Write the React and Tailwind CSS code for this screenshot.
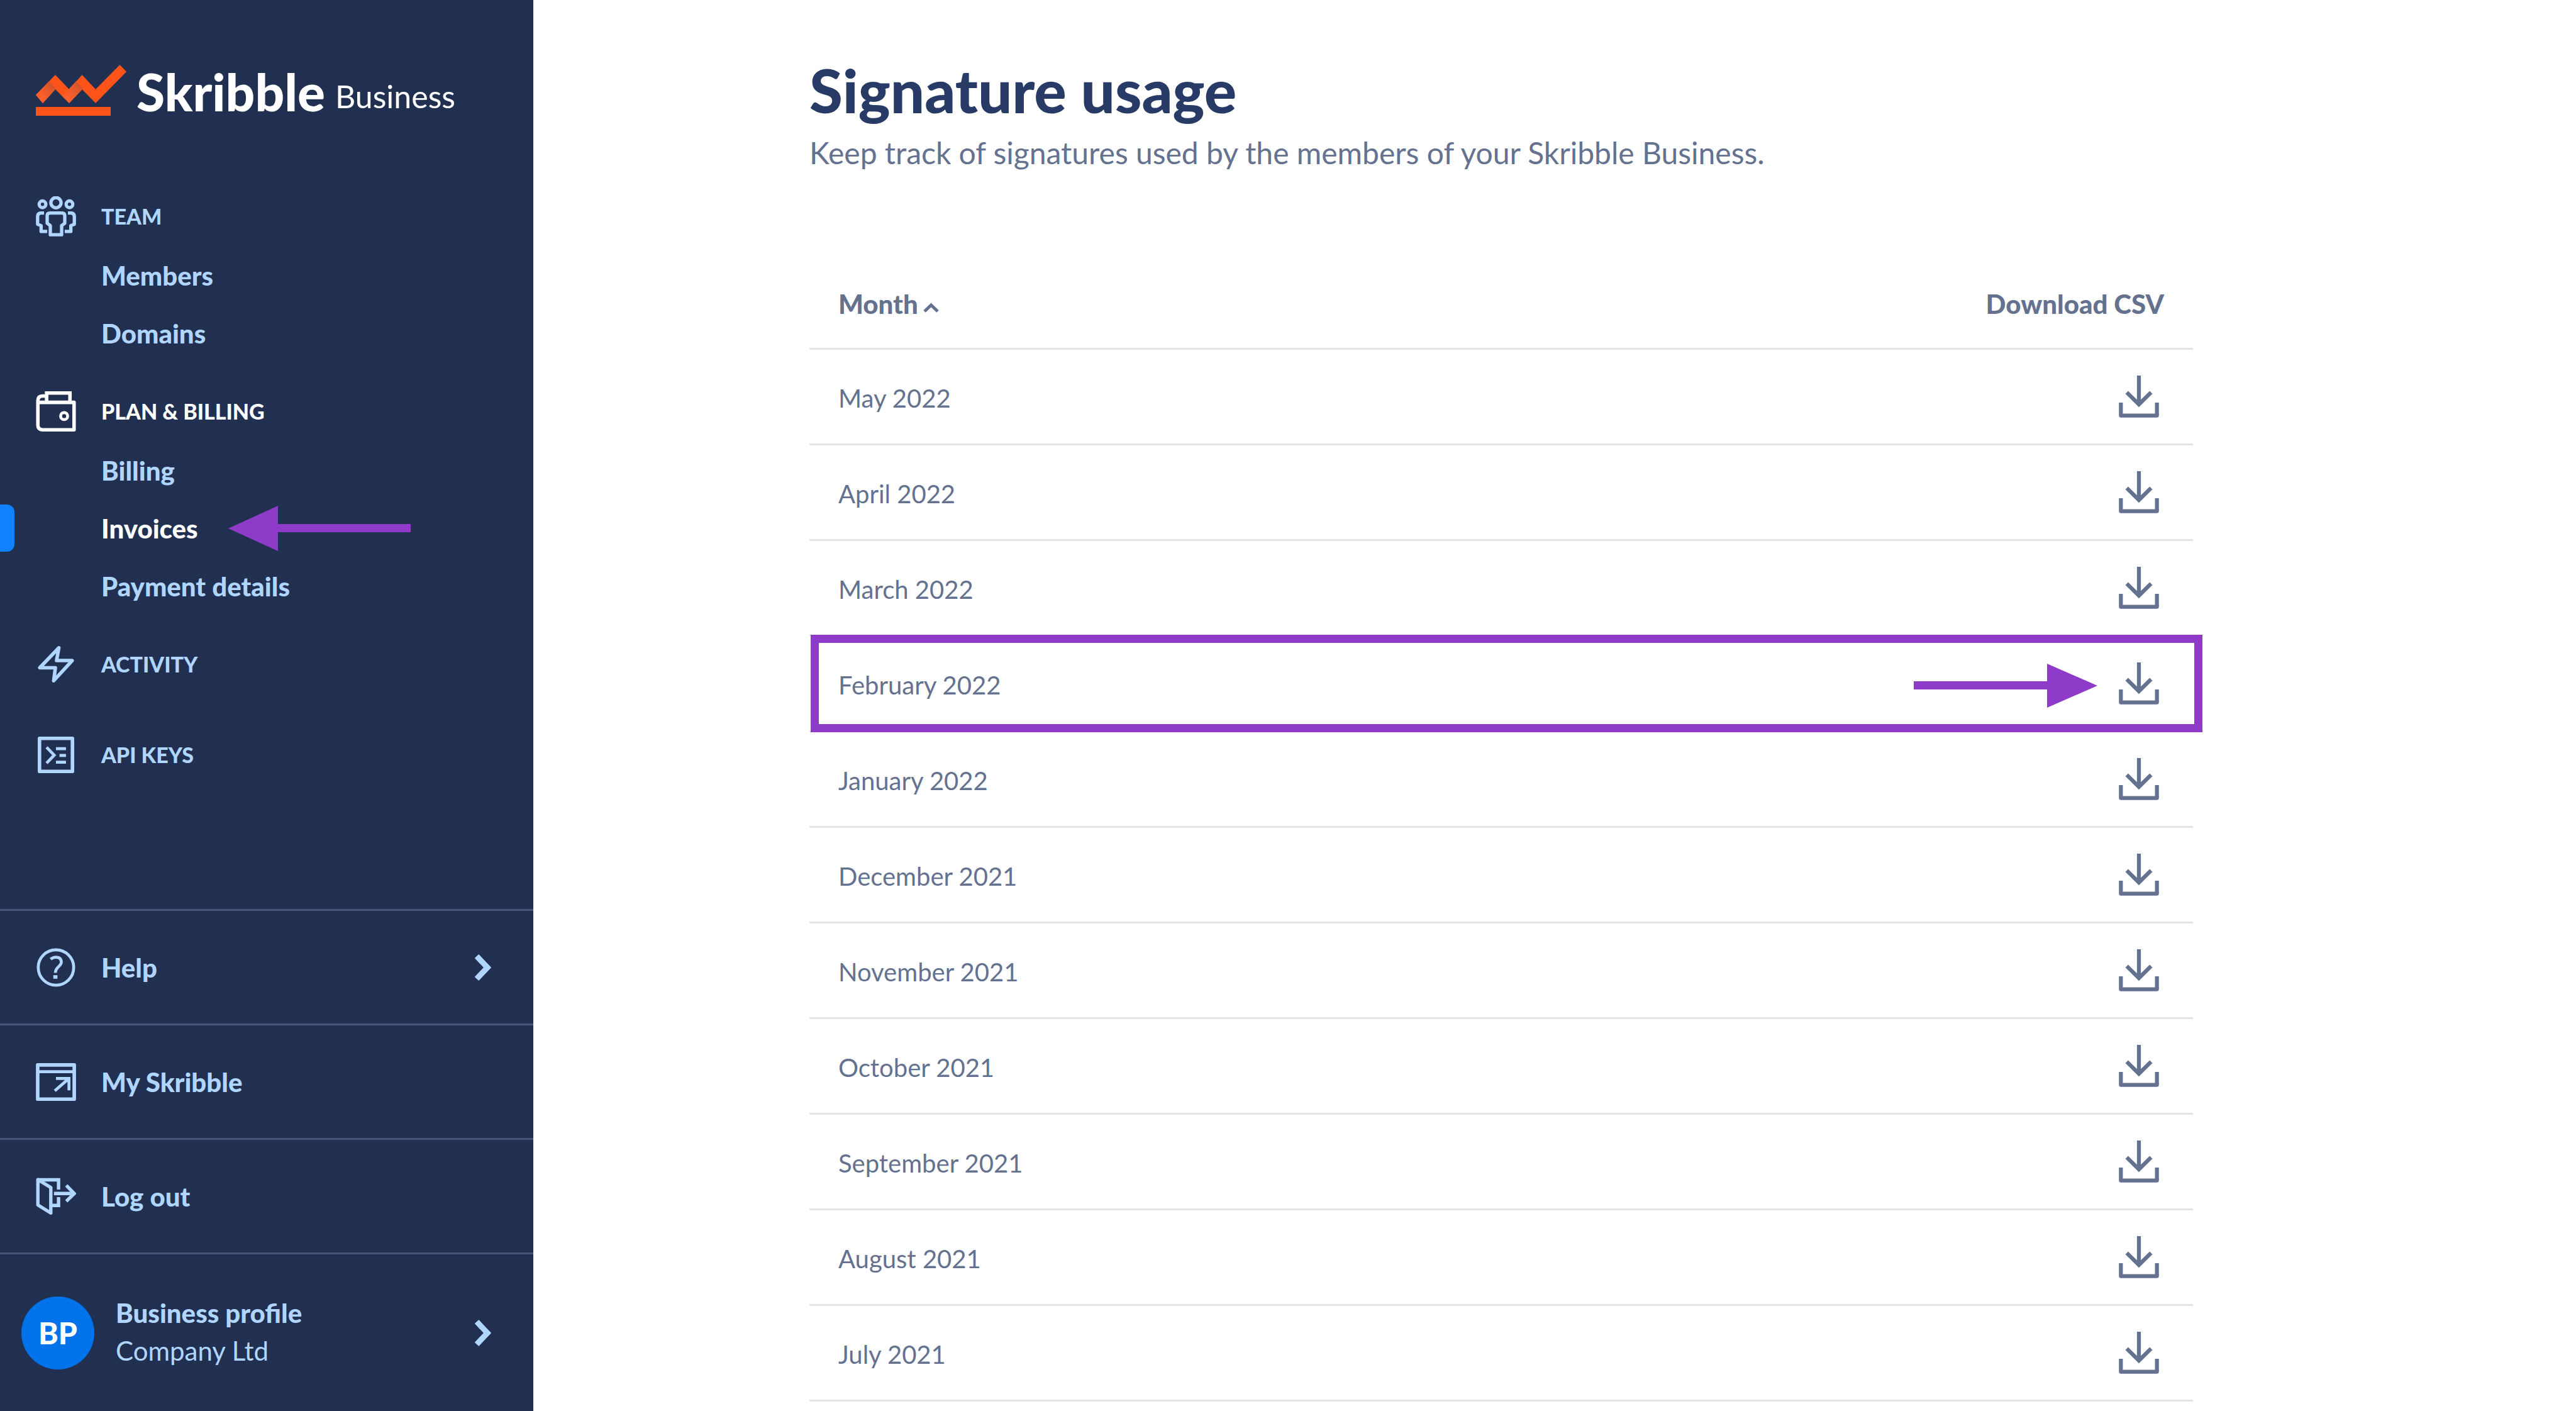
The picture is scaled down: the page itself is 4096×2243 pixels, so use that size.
const MONTHS = [
  "May 2022",
  "April 2022",
  "March 2022",
  "February 2022",
  "January 2022",
  "December 2021",
  "November 2021",
  "October 2021",
  "September 2021",
  "August 2021",
  "July 2021",
];

const HIGHLIGHTED = "February 2022";

function Icon({ viewBox, strokeWidth, className, children }) {
  return (
    <svg viewBox={viewBox} className={className} fill="none" stroke="currentColor" strokeWidth={strokeWidth} aria-hidden="true">
      {children}
    </svg>
  );
}

function TeamIcon() {
  return (
    <Icon viewBox="0 0 206 206" strokeWidth="17" className="size-16">
      <circle cx="103" cy="33" r="26" />
      <circle cx="34" cy="41" r="17" />
      <circle cx="172" cy="41" r="17" />
      <path d="M58 100Q58 86 72 86H134Q148 86 148 100V138L132 150V197H74V150L58 138Z" strokeLinejoin="round" />
      <path d="M42 86H24Q9 88 9 104V143L27 150V180H58" strokeLinejoin="round" />
      <path d="M164 86H182Q197 88 197 104V143L179 150V180H148" strokeLinejoin="round" />
    </Icon>
  );
}

function WalletIcon() {
  return (
    <Icon viewBox="0 0 68 69" strokeWidth="6" className="size-16">
      <path d="M18 19V3H58V19" />
      <path d="M18 8H11Q3 8 3 16V58Q3 66 11 66H65V19H3" strokeLinejoin="round" />
      <circle cx="48" cy="42.5" r="6" strokeWidth="5" />
    </Icon>
  );
}

function BoltIcon() {
  return (
    <Icon viewBox="0 0 62 63" strokeWidth="6" className="size-[58px]">
      <path d="M36 3L3 37.5H30L27 60L59 25H32Z" strokeLinejoin="round" />
    </Icon>
  );
}

function ApiIcon() {
  return (
    <Icon viewBox="0 0 62 62" strokeWidth="6" className="size-[58px]">
      <rect x="3" y="3" width="56" height="56" strokeLinejoin="round" />
      <path d="M15 18L28 31.5L15 45M31 20.5H48M37 32H48M31 43.5H48" strokeWidth="5" />
    </Icon>
  );
}

function HelpIcon() {
  return (
    <Icon viewBox="0 0 66 66" strokeWidth="5" className="size-[62px]">
      <circle cx="33" cy="33" r="30" />
      <path d="M24 19Q28 15.500 33 15.500Q42 15.500 42 24C42 31 32 32 32 42" strokeWidth="5" />
      <path d="M32 46V52" strokeWidth="7" />
    </Icon>
  );
}

function WindowIcon() {
  return (
    <Icon viewBox="0 0 68 64" strokeWidth="6" className="h-[60px] w-16">
      <rect x="3" y="3" width="62" height="58" strokeLinejoin="round" />
      <path d="M3 14.500H65M34 26H56V46M32 47L56 26" strokeWidth="5" />
    </Icon>
  );
}

function LogoutIcon() {
  return (
    <Icon viewBox="0 0 200 190" strokeWidth="17" className="h-[60px] w-16">
      <path d="M9 10L74 50V178L9 138Z" strokeLinejoin="round" />
      <path d="M9 11H113V60M113 98V140H78M90 80H190M152 39L192 80L152 119" />
    </Icon>
  );
}

function ChevronRight() {
  return (
    <Icon viewBox="0 0 28 44" strokeWidth="9" className="h-11 w-7">
      <path d="M4 4L21 22L4 40" />
    </Icon>
  );
}

function DownloadIcon() {
  return (
    <Icon viewBox="0 0 204 215" strokeWidth="20" className="h-[67px] w-16">
      <path d="M10 138V204H194V138" strokeLinejoin="round" />
      <path d="M102 0V146M40 86L102 147L164 86" />
    </Icon>
  );
}

function Logo() {
  return (
    <svg viewBox="0 0 144 81" className="h-[81px] w-36" aria-hidden="true">
      <defs>
        <linearGradient id="fold" x1="0" y1="1" x2="1" y2="0">
          <stop offset="0.3" stopColor="#fb5f2c" />
          <stop offset="1" stopColor="#c8502b" />
        </linearGradient>
      </defs>
      <path d="M0 48L31 16L53 39L73.500 16L95 39L133.500 0L144 11L95 61L73.500 39L53 61L31 39L11 61Z" fill="#ff5419" />
      <path d="M0 48L21 26L32 38L11 61Z" fill="url(#fold)" />
      <path d="M42 50L64 26L75 38L53 61Z" fill="url(#fold)" />
      <rect x="0" y="67" width="119" height="14" fill="#ff5419" />
    </svg>
  );
}

function NavHeader({ icon, label, active }) {
  return (
    <a
      href="#"
      className={
        "flex h-24 items-center text-[34px] leading-[46px] font-black " + (active ? "text-white" : "text-[#b0d6ff]")
      }
    >
      <span className="flex w-[161px] justify-center pr-[1px] pl-[18px]">{icon}</span>
      {label}
    </a>
  );
}

function NavItem({ label, active }) {
  return (
    <li className="relative">
      {active && <span className="absolute top-2 left-0 h-[75px] w-[23px] rounded-r-xl bg-[#0f82ff]" />}
      <a
        href="#"
        aria-current={active ? "page" : undefined}
        className={
          "flex h-[92px] items-center pl-[161px] text-[42px] leading-[50px] font-black " +
          (active ? "text-white" : "text-[#b0d6ff]")
        }
      >
        {label}
      </a>
      {active && (
        <svg viewBox="0 0 290 72" className="absolute top-[10px] left-[363px] h-[72px] w-[290px]" fill="#8d3bc8" aria-hidden="true">
          <path d="M0 36L79 0V29H290V42H79V72Z" />
        </svg>
      )}
    </li>
  );
}

function FooterRow({ icon, label, chevron }) {
  return (
    <button
      type="button"
      className="flex h-[182px] w-full items-center border-t-3 border-[#46567a] pr-[66px] text-left text-[42px] leading-[50px] font-black"
    >
      <span className="flex w-[161px] justify-center pr-[1px] pl-[18px]">{icon}</span>
      <span className="flex-1">{label}</span>
      {chevron && <ChevronRight />}
    </button>
  );
}

function Sidebar() {
  return (
    <aside className="flex w-[848px] shrink-0 flex-col bg-[#213051] text-[#b0d6ff]">
      <a href="#" className="flex h-[296px] items-start gap-4 pt-[103px] pl-[57px] text-white">
        <Logo />
        <span className="flex items-start gap-4 pt-[2px]">
          <span className="text-[82px] leading-[80px] font-black">Skribble</span>
          <span className="text-[50px] leading-[96px]">Business</span>
        </span>
      </a>
      <nav>
        <NavHeader icon={<TeamIcon />} label="TEAM" />
        <ul className="mb-[30px]">
          <NavItem label="Members" />
          <NavItem label="Domains" />
        </ul>
        <NavHeader icon={<WalletIcon />} label="PLAN & BILLING" active />
        <ul className="mb-[30px]">
          <NavItem label="Billing" />
          <NavItem label="Invoices" active />
          <NavItem label="Payment details" />
        </ul>
        <div className="flex flex-col gap-12">
          <NavHeader icon={<BoltIcon />} label="ACTIVITY" />
          <NavHeader icon={<ApiIcon />} label="API KEYS" />
        </div>
      </nav>
      <div className="mt-auto">
        <FooterRow icon={<HelpIcon />} label="Help" chevron />
        <FooterRow icon={<WindowIcon />} label="My Skribble" />
        <FooterRow icon={<LogoutIcon />} label="Log out" />
        <button
          type="button"
          className="flex h-[252px] w-full items-center border-t-3 border-[#46567a] pr-[66px] pl-[34px] text-left"
        >
          <span className="flex size-[116px] items-center justify-center rounded-full bg-[#0072ea] text-[48px] leading-[60px] font-black text-white">
            BP
          </span>
          <span className="flex flex-1 flex-col pb-1 pl-[34px]">
            <span className="text-[42px] leading-[60px] font-black">Business profile</span>
            <span className="text-[42px] leading-[60px]">Company Ltd</span>
          </span>
          <ChevronRight />
        </button>
      </div>
    </aside>
  );
}

function UsageRow({ month, highlighted }) {
  return (
    <tr className="relative">
      <td className="h-[152px] border-b-3 border-[#e4e4e4] pt-1 pl-[46px]">
        {month}
        {highlighted && <span className="absolute -top-[3px] -right-[15px] bottom-0 left-[2px] border-13 border-[#8d3bc8]" />}
      </td>
      <td className="h-[152px] border-b-3 border-[#e4e4e4] pr-[54px]">
        {highlighted && (
          <svg viewBox="0 0 292 70" className="absolute top-[43px] right-[152px] h-[70px] w-[292px]" fill="#8d3bc8" aria-hidden="true">
            <path d="M292 35L212 0V28H0V41H212V70Z" />
          </svg>
        )}
        <button type="button" aria-label={"Download CSV for " + month} className="relative ml-auto block">
          <DownloadIcon />
        </button>
      </td>
    </tr>
  );
}

export default function App() {
  return (
    <div className="flex min-h-screen bg-white font-['Lato',sans-serif]">
      <Sidebar />
      <main className="flex-1 pt-[95px] pr-[609px] pl-[439px] text-[#64718f]">
        <h1 className="text-[96px] leading-[96px] font-black text-[#273b66]">Signature usage</h1>
        <p className="mt-5 text-[48px] leading-[64px]">
          Keep track of signatures used by the members of your Skribble Business.
        </p>
        <table className="mt-[137px] w-full border-separate border-spacing-0 text-[40px] leading-[52px]">
          <thead>
            <tr className="text-[42px]">
              <th className="h-[144px] border-b-3 border-[#e4e4e4] pl-[46px] text-left">
                <button type="button" className="flex items-center gap-2 font-black">
                  Month
                  <svg viewBox="0 0 25 16" className="mt-3 h-4 w-[25px]" fill="none" stroke="currentColor" strokeWidth="5" aria-hidden="true">
                    <path d="M2 14L12.500 4L23 14" />
                  </svg>
                </button>
              </th>
              <th className="h-[144px] border-b-3 border-[#e4e4e4] pr-[46px] text-right font-black">Download CSV</th>
            </tr>
          </thead>
          <tbody>
            {MONTHS.map((month) => (
              <UsageRow key={month} month={month} highlighted={month === HIGHLIGHTED} />
            ))}
          </tbody>
        </table>
      </main>
    </div>
  );
}
